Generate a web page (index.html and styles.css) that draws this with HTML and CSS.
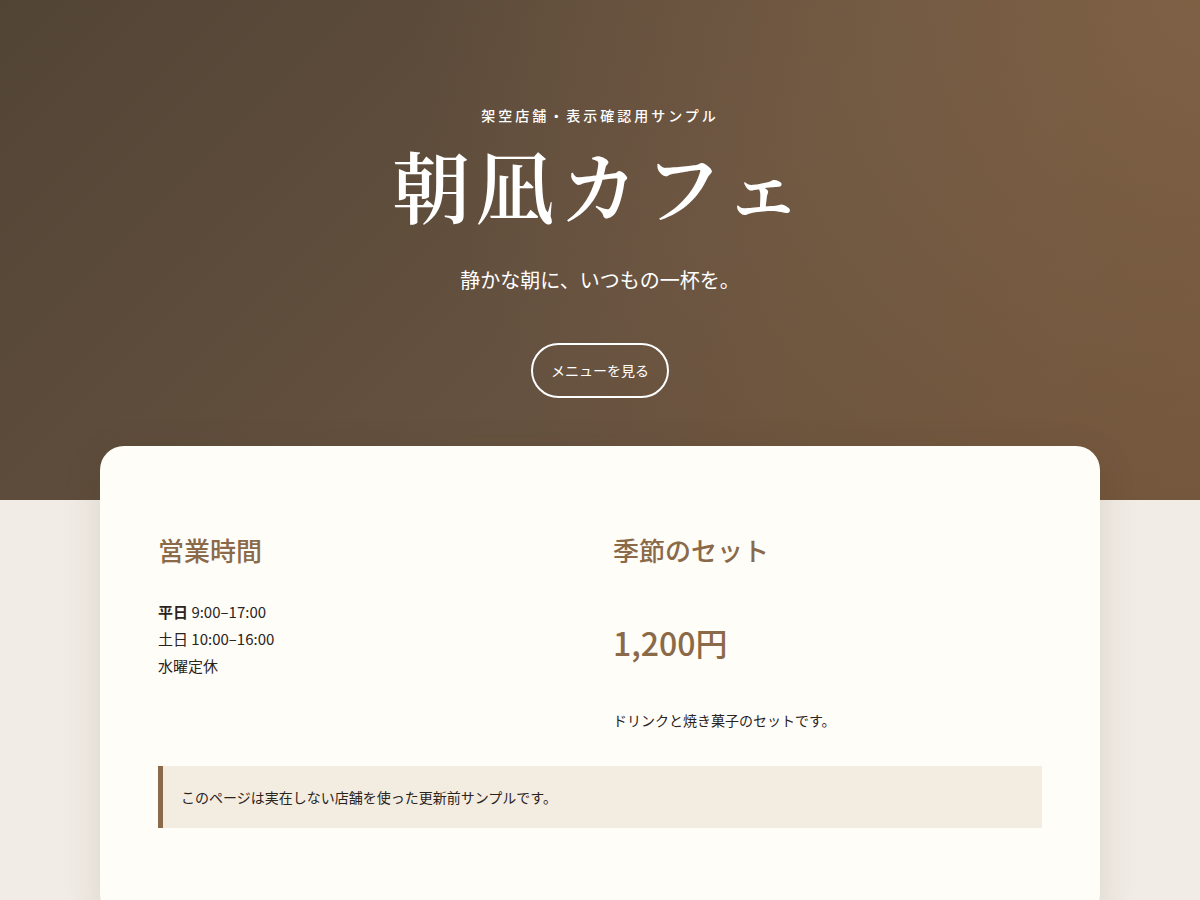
FILE: index.html
```html
<!DOCTYPE html>
<html lang="ja">
<head>
  <meta charset="UTF-8">
  <meta name="viewport" content="width=device-width, initial-scale=1.0">
  <title>朝凪カフェ</title>
  <link rel="stylesheet" href="styles.css">
</head>
<body>
  <header class="hero">
    <p class="hero-note">架空店舗・表示確認用サンプル</p>
    <h1 class="hero-title">朝凪カフェ</h1>
    <p class="hero-lead">静かな朝に、いつもの一杯を。</p>
    <a class="hero-button" href="#menu">メニューを見る</a>
  </header>

  <main class="card">
    <div class="info-grid">
      <section class="info">
        <h2>営業時間</h2>
        <p class="hours"><strong>平日</strong> 9:00–17:00<br>土日 10:00–16:00<br>水曜定休</p>
      </section>
      <section class="info" id="menu">
        <h2>季節のセット</h2>
        <p class="price">1,200円</p>
        <p class="desc">ドリンクと焼き菓子のセットです。</p>
      </section>
    </div>
    <div class="notice">このページは実在しない店舗を使った更新前サンプルです。</div>
  </main>
</body>
</html>
```

FILE: styles.css
```css
body {
  margin: 0;
  font-family: "Noto Sans CJK JP", "Noto Sans", sans-serif;
  background-color: #f1ece5;
  color: #2b241d;
}
.hero {
  height: 500px;
  box-sizing: border-box;
  padding-top: 104px;
  text-align: center;
  color: #fff;
  background:
    radial-gradient(circle at 100% 0%, rgba(128, 98, 70, 0.9), rgba(128, 98, 70, 0) 60%),
    linear-gradient(135deg, #524435 0%, #665240 55%, #6f5238 100%);
}
.hero-note {
  margin: 0;
  font-size: 14px;
  font-weight: 500;
  letter-spacing: 3px;
  line-height: 22px;
}
.hero-title {
  margin: 8px 0 0;
  font-family: "Noto Serif CJK JP", "IPAMincho", serif;
  font-weight: 600;
  font-size: 78px;
  letter-spacing: 6px;
  line-height: 100px;
}
.hero-lead {
  margin: 31px 0 0;
  font-size: 20px;
  line-height: 30px;
}
.hero-button {
  display: inline-block;
  margin-top: 48px;
  padding: 0 18px;
  height: 55px;
  line-height: 51px;
  box-sizing: border-box;
  border: 2px solid #fff;
  border-radius: 28px;
  color: #fff;
  font-size: 14px;
  text-decoration: none;
}
.card {
  width: 1000px;
  box-sizing: border-box;
  margin: -54px auto 0;
  padding: 86px 58px 90px;
  background-color: #fffdf8;
  border-radius: 24px;
  box-shadow: 0 10px 40px rgba(60, 40, 20, 0.12);
}
.info-grid {
  display: grid;
  grid-template-columns: 1fr 1fr;
  gap: 26px;
}
.info h2 {
  margin: 0;
  font-size: 26px;
  line-height: 36px;
  font-weight: 500;
  color: #8a6a49;
}
.hours {
  margin: 30px 0 0;
  font-size: 15px;
  line-height: 27px;
}
.price {
  margin: 52px 0 0;
  font-size: 32px;
  line-height: 45px;
  font-weight: 500;
  color: #8a6a49;
}
.desc {
  margin: 42px 0 0;
  font-size: 14px;
  line-height: 27px;
}
.notice {
  margin-top: 32px;
  padding: 18px 18px;
  background-color: #f3ece1;
  border-left: 5px solid #8a6a49;
  font-size: 14px;
  line-height: 26px;
}
```
